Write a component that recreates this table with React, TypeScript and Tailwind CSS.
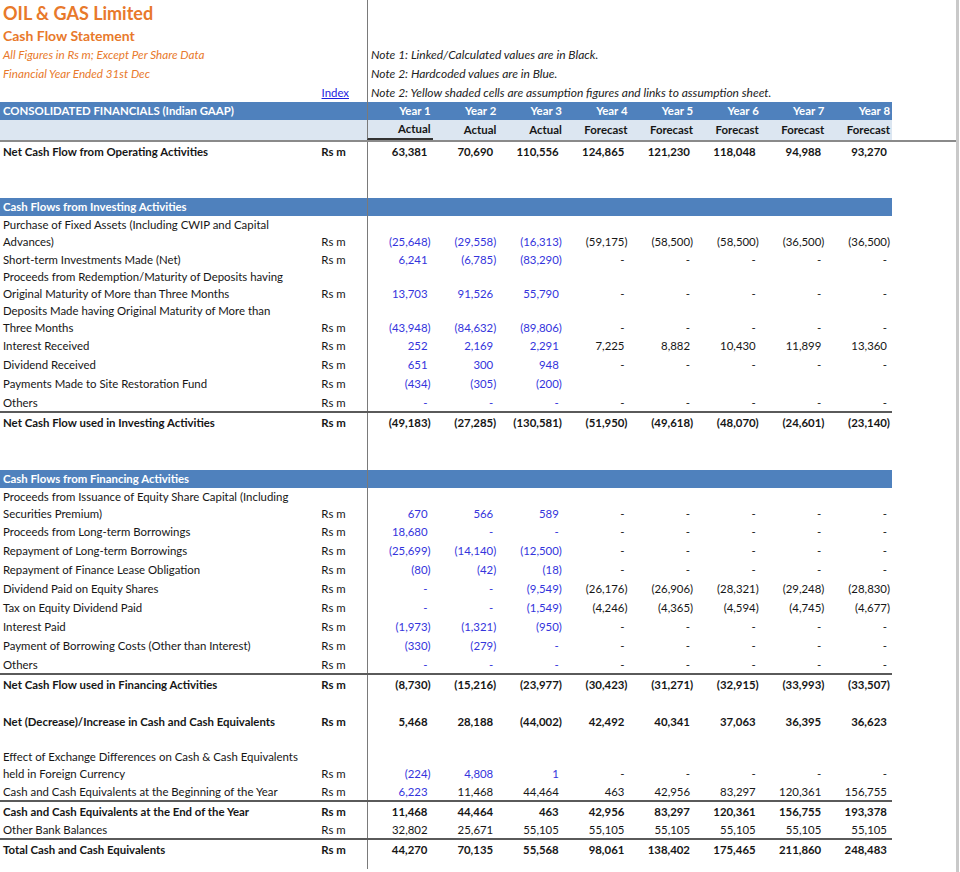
import React from 'react'

const GRID = 'grid grid-cols-[300px_67px_repeat(8,65.625px)] w-[892px]'

interface RowProps {
  label?: React.ReactNode
  unit?: string
  values?: string[]
  blueCount?: number
  bold?: boolean
  wrap?: boolean
  height?: string
  line?: boolean
}

// One spreadsheet line: label, unit and eight year columns
function Row({
  label,
  unit = 'Rs m',
  values = [],
  blueCount = 0,
  bold = false,
  wrap = false,
  height = 'h-[19px]',
  line = false
}: RowProps) {
  const cells = Array.from({ length: 8 }, (_, i) => values[i] ?? '')
  return (
    <div className={`${GRID} ${height} ${line ? 'border-t-2 border-[#5a5a5a]' : ''} ${bold ? 'font-bold' : ''}`}>
      <div className={`pl-[3px] flex flex-col ${wrap ? 'justify-end' : 'justify-center'} leading-[17px] whitespace-nowrap`}>
        {label}
      </div>
      <div className={`flex ${wrap ? 'items-end' : 'items-center'} justify-center leading-[17px]`}>
        {label ? unit : ''}
      </div>
      {cells.map((v, i) => {
        const neg = v.startsWith('(')
        return (
          <div
            key={i}
            className={`flex ${wrap ? 'items-end' : 'items-center'} justify-end pr-[2px] leading-[17px] ${
              i === 0 ? 'border-l border-[#7a7a7a]' : ''
            } ${i < blueCount && !bold ? 'text-[#3434dc]' : 'text-[#161616]'}`}
          >
            {v}
            {v && !neg ? <span className="invisible">)</span> : null}
          </div>
        )
      })}
    </div>
  )
}

function Blank({ height }: { height: string }) {
  return (
    <div className={`${GRID} ${height}`}>
      <div className="col-span-2" />
      <div className="col-span-8 border-l border-[#7a7a7a]" />
    </div>
  )
}

function SectionHeader({ title }: { title: string }) {
  return (
    <div className={`${GRID} h-[18px] bg-[#4f81bd] text-white font-bold`}>
      <div className="col-span-2 pl-[3px] flex items-center">{title}</div>
      <div className="col-span-8 border-l border-[#7a7a7a]" />
    </div>
  )
}

const dash5 = ['-', '-', '-', '-', '-']
const years = ['Year 1', 'Year 2', 'Year 3', 'Year 4', 'Year 5', 'Year 6', 'Year 7', 'Year 8']
const kinds = ['Actual', 'Actual', 'Actual', 'Forecast', 'Forecast', 'Forecast', 'Forecast', 'Forecast']
const notes = [
  'Note 1: Linked/Calculated values are in Black.',
  'Note 2: Hardcoded values are in Blue.',
  'Note 2: Yellow shaded cells are assumption figures and links to assumption sheet.'
]

export default function App() {
  return (
    <div className="flex bg-white text-[11.4px] text-[#161616] font-['Lato','Liberation_Sans',sans-serif]">
      <div className="w-[956px]">
        {/* Title block with notes */}
        <div className={`${GRID} h-[25px]`}>
          <div className="col-span-2 pl-[3px] flex items-center text-[18px] font-bold text-[#e8792b]">
            OIL &amp; GAS Limited
          </div>
          <div className="col-span-8 border-l border-[#7a7a7a]" />
        </div>
        <div className={`${GRID} h-[20px]`}>
          <div className="col-span-2 pl-[3px] flex items-center text-[14px] font-bold text-[#e8792b]">
            Cash Flow Statement
          </div>
          <div className="col-span-8 border-l border-[#7a7a7a]" />
        </div>
        {[
          'All Figures in Rs m; Except Per Share Data',
          'Financial Year Ended 31st Dec',
          ''
        ].map((t, i) => (
          <div key={i} className={`${GRID} h-[19px]`}>
            <div className="pl-[3px] flex items-center italic text-[11.7px] text-[#e8792b] whitespace-nowrap">{t}</div>
            <div className="flex items-center justify-end pr-[18px]">
              {i === 2 ? <span className="text-[#1c1ce0] underline">Index</span> : null}
            </div>
            <div className="col-span-8 border-l border-[#7a7a7a] pl-[3px] flex items-center italic text-[12px] text-[#222] whitespace-nowrap">
              {notes[i]}
            </div>
          </div>
        ))}

        {/* Column headers */}
        <div className={`${GRID} h-[18px] bg-[#4f81bd] text-white font-bold`}>
          <div className="col-span-2 pl-[3px] flex items-center">CONSOLIDATED FINANCIALS (Indian GAAP)</div>
          {years.map((y, i) => (
            <div key={y} className={`flex items-center justify-end pr-[2px] ${i === 0 ? 'border-l border-[#7a7a7a]' : ''}`}>
              {y}
            </div>
          ))}
        </div>
        <div className="w-[956px] border-b-2 border-[#8a8a8a]">
          <div className={`${GRID} h-[20px] bg-[#dce6f1] font-bold`}>
            <div className="col-span-2" />
            {kinds.map((k, i) => (
              <div
                key={i}
                className={`flex items-center justify-end pr-[2px] ${i === 0 ? 'border-l border-[#7a7a7a] border-b-2 border-b-[#333]' : ''}`}
              >
                {k}
              </div>
            ))}
          </div>
        </div>

        <Row
          label="Net Cash Flow from Operating Activities"
          bold
          values={['63,381', '70,690', '110,556', '124,865', '121,230', '118,048', '94,988', '93,270']}
        />
        <Blank height="h-[37px]" />

        {/* Investing */}
        <SectionHeader title="Cash Flows from Investing Activities" />
        <Row
          wrap
          height="h-[34px]"
          label={<><span>Purchase of Fixed Assets (Including CWIP and Capital</span><span>Advances)</span></>}
          blueCount={3}
          values={['(25,648)', '(29,558)', '(16,313)', '(59,175)', '(58,500)', '(58,500)', '(36,500)', '(36,500)']}
        />
        <Row label="Short-term Investments Made (Net)" height="h-[18px]" blueCount={3} values={['6,241', '(6,785)', '(83,290)', ...dash5]} />
        <Row
          wrap
          height="h-[34px]"
          label={<><span>Proceeds from Redemption/Maturity of Deposits having</span><span>Original Maturity of More than Three Months</span></>}
          blueCount={3}
          values={['13,703', '91,526', '55,790', ...dash5]}
        />
        <Row
          wrap
          height="h-[34px]"
          label={<><span>Deposits Made having Original Maturity of More than</span><span>Three Months</span></>}
          blueCount={3}
          values={['(43,948)', '(84,632)', '(89,806)', ...dash5]}
        />
        <Row label="Interest Received" blueCount={3} values={['252', '2,169', '2,291', '7,225', '8,882', '10,430', '11,899', '13,360']} />
        <Row label="Dividend Received" blueCount={3} values={['651', '300', '948', ...dash5]} />
        <Row label="Payments Made to Site Restoration Fund" blueCount={3} values={['(434)', '(305)', '(200)']} />
        <Row label="Others" height="h-[18px]" blueCount={3} values={['-', '-', '-', ...dash5]} />
        <Row
          line
          label="Net Cash Flow used in Investing Activities"
          bold
          height="h-[20px]"
          values={['(49,183)', '(27,285)', '(130,581)', '(51,950)', '(49,618)', '(48,070)', '(24,601)', '(23,140)']}
        />
        <Blank height="h-[39px]" />

        {/* Financing */}
        <SectionHeader title="Cash Flows from Financing Activities" />
        <Row
          wrap
          height="h-[34px]"
          label={<><span>Proceeds from Issuance of Equity Share Capital (Including</span><span>Securities Premium)</span></>}
          blueCount={3}
          values={['670', '566', '589', ...dash5]}
        />
        <Row label="Proceeds from Long-term Borrowings" blueCount={3} values={['18,680', '-', '-', ...dash5]} />
        <Row label="Repayment of Long-term Borrowings" blueCount={3} values={['(25,699)', '(14,140)', '(12,500)', ...dash5]} />
        <Row label="Repayment of Finance Lease Obligation" blueCount={3} values={['(80)', '(42)', '(18)', ...dash5]} />
        <Row label="Dividend Paid on Equity Shares" blueCount={3} values={['-', '-', '(9,549)', '(26,176)', '(26,906)', '(28,321)', '(29,248)', '(28,830)']} />
        <Row label="Tax on Equity Dividend Paid" blueCount={3} values={['-', '-', '(1,549)', '(4,246)', '(4,365)', '(4,594)', '(4,745)', '(4,677)']} />
        <Row label="Interest Paid" blueCount={3} values={['(1,973)', '(1,321)', '(950)', ...dash5]} />
        <Row label="Payment of Borrowing Costs (Other than Interest)" blueCount={3} values={['(330)', '(279)', '-', ...dash5]} />
        <Row label="Others" height="h-[18px]" blueCount={3} values={['-', '-', '-', ...dash5]} />
        <Row
          line
          label="Net Cash Flow used in Financing Activities"
          bold
          height="h-[20px]"
          values={['(8,730)', '(15,216)', '(23,977)', '(30,423)', '(31,271)', '(32,915)', '(33,993)', '(33,507)']}
        />
        <Blank height="h-[19px]" />
        <Row
          label="Net (Decrease)/Increase in Cash and Cash Equivalents"
          bold
          height="h-[18px]"
          values={['5,468', '28,188', '(44,002)', '42,492', '40,341', '37,063', '36,395', '36,623']}
        />
        <Blank height="h-[18px]" />

        {/* Closing balances */}
        <Row
          wrap
          height="h-[34px]"
          label={<><span>Effect of Exchange Differences on Cash &amp; Cash Equivalents</span><span>held in Foreign Currency</span></>}
          blueCount={3}
          values={['(224)', '4,808', '1', ...dash5]}
        />
        <Row
          label="Cash and Cash Equivalents at the Beginning of the Year"
          height="h-[18px]"
          blueCount={1}
          values={['6,223', '11,468', '44,464', '463', '42,956', '83,297', '120,361', '156,755']}
        />
        <Row
          line
          label="Cash and Cash Equivalents at the End of the Year"
          bold
          height="h-[20px]"
          values={['11,468', '44,464', '463', '42,956', '83,297', '120,361', '156,755', '193,378']}
        />
        <Row
          label="Other Bank Balances"
          height="h-[18px]"
          values={['32,802', '25,671', '55,105', '55,105', '55,105', '55,105', '55,105', '55,105']}
        />
        <Row
          line
          label="Total Cash and Cash Equivalents"
          bold
          height="h-[20px]"
          values={['44,270', '70,135', '55,568', '98,061', '138,402', '175,465', '211,860', '248,483']}
        />
        <Blank height="h-[11px]" />
      </div>
      <div className="w-[3px] min-h-[872px] bg-[#c9c9c9]" />
    </div>
  )
}
